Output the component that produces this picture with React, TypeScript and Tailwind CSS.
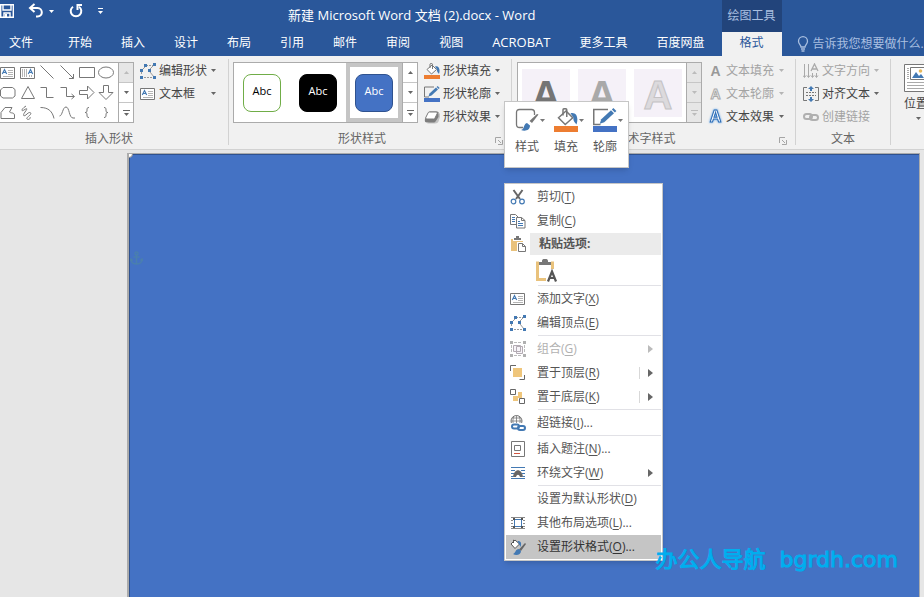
import React from 'react';
import clsx from 'clsx';

type IconProps = { className?: string };

const BLUE = '#4379b3';
const INK = '#777';

// ---------- small glyphs ----------

const Caret = ({ className = 'text-[#777]' }: IconProps) => (
  <svg viewBox="0 0 5 3" className={clsx('w-[5px] h-[3px] shrink-0', className)}>
    <path d="M0 0h5L2.5 3z" fill="currentColor" />
  </svg>
);

const Launcher = () => (
  <svg viewBox="0 0 8 8" className="w-2 h-2" fill="none" stroke="#a5a5a5">
    <path d="M.5 6V.5H6M3 3l3 3M7.5 3v4.5H3" />
  </svg>
);

const SaveIcon = () => (
  <svg viewBox="0 0 16 16" className="w-4 h-4" fill="none" stroke="#fff" strokeWidth="1.4">
    <path d="M1.7 1.7h12.6v12.6H1.7z" />
    <path d="M4 2v5h8V2" />
    <path d="M5 14v-4h6v4" />
    <path d="M6 11h2v3H6z" fill="#fff" stroke="none" />
  </svg>
);

const UndoIcon = () => (
  <svg viewBox="0 0 16 16" className="w-4 h-4" fill="none" stroke="#fff" strokeWidth="2">
    <path d="M6.5 1L2 5l4.5 4" />
    <path d="M2.500 5h7c5.500 0 6 8.500 0 8.500H8" />
  </svg>
);

const RedoIcon = () => (
  <svg viewBox="0 0 16 16" className="w-4 h-4" fill="none" stroke="#fff" strokeWidth="2">
    <path d="M5 3.700a5.300 5.300 0 1 0 6 0" />
    <path d="M14 2H9.500v5" />
  </svg>
);

const BulbIcon = () => (
  <svg viewBox="0 0 12 16" className="w-3 h-4" fill="none" stroke="#a9bfe0" strokeWidth="1.300">
    <path d="M4 11c0-2-2.500-3-2.500-5.800a4.500 4.500 0 0 1 9 0C10.500 8 8 9 8 11z" />
    <path d="M4 13h4M4.500 15h3" />
  </svg>
);

// ---------- shape gallery ----------

const TextBoxIcon = () => (
  <svg viewBox="0 0 16 16" className="w-4 h-4 shrink-0" fill="none" stroke={INK}>
    <path d="M.5 2.500h14v11H.5z" fill="#fff" />
    <path d="M8 5.500h5M8 7.500h5M8 9.500h5M3 11.500h10" stroke="#b4b4b4" />
    <path d="M2.300 9L4.500 4.500 6.700 9M3.200 7.500h2.600" stroke={BLUE} strokeWidth="1.200" />
  </svg>
);

const VerticalTextIcon = () => (
  <svg viewBox="0 0 16 16" className="w-4 h-4 shrink-0" fill="none" stroke={INK}>
    <path d="M.5 2.500h14v11H.5z" fill="#fff" />
    <path d="M2.500 4v8M4.500 4v8M6.500 4v8M9.500 10v2M11.500 10v2" stroke="#b4b4b4" />
    <path d="M8.300 9L10.500 4.500 12.700 9M9.200 7.500h2.600" stroke={BLUE} strokeWidth="1.200" />
  </svg>
);

const shapePaths = [
  'M1.500 1.500l13 13',
  'M1.500 1.500l13 13M14.500 10v4.500H10',
  'M.5 3.500h15v10H.5z',
  'M.5 8.500a7.500 5.500 0 1 0 15 0a7.500 5.500 0 1 0-15 0',
  'M3 3.500h9.500l2.500 2v6.500l-2.500 2H3L.5 12V6z',
  'M8 2.500l6.500 12h-13z',
  'M1.500 3.500h6v10h7',
  'M1.500 3.500h6v9h7.500M12.500 10l3 2.500-3 2.500',
  'M.5 6.500h8v-4.500l6.500 6.500-6.500 6.500v-4.500h-8z',
  'M5.500 1.500h5v7h4.500L8 15.500 1 8.500h4.500z',
  'M1 14.500v-6l4-5h7l-2.500 4.500c1 1.500 4.500 0 5 3v3.500z',
  'M6 2C1 5 1 8 4 6s4-2 1 2-1 5 2 2 5-1 3 1-4 3-3 4 4 0 3-2',
  'M1.500 3.500c8 0 12 4 13.500 11',
  'M.5 12c3 0 3-9 6.500-9s3 11 7 11h2',
  'M10 3.500c-2 0-2 1-2 2.500s0 2.500-2 2.500c2 0 2 1 2 2.500s0 2.500 2 2.500',
  'M6 3.500c2 0 2 1 2 2.500s0 2.500 2 2.500c-2 0-2 1-2 2.500s0 2.500-2 2.500',
];

const EditPointsIcon = () => (
  <svg viewBox="0 0 16 16" className="w-4 h-4 shrink-0" fill="none">
    <path d="M6 2.500h7M1.500 9v3M4 14.500h9" stroke="#999" strokeDasharray="2 1" />
    <path d="M5 4L2 7M13 3l-4 4M10 9l4 5" stroke="#999" />
    <path d="M4 1h3v3H4zM13 0h3v3h-3zM0 6h3v3H0zM8 6h3v3H8zM0 13h3v3H0zM13 13h3v3h-3z" fill={BLUE} />
  </svg>
);

// ---------- shape style icons ----------

const BucketIcon = ({ className = 'w-4 h-4' }: IconProps) => (
  <svg viewBox="0 0 16 16" className={clsx('shrink-0', className)} fill="none">
    <path d="M3 6.500L8 2l4.500 4.500-5 4.500z" fill="#fff" stroke={INK} />
    <path d="M6 5V1.200c0-1 2.500-1 2.500 0V6" stroke={INK} />
    <path d="M11 3.500c4-1 5.500 3 4 7.500-1-1.500-2.500-2.500-2-4.500z" fill={BLUE} />
    <path d="M0 12h16v4H0z" fill="#ed7d31" />
  </svg>
);

const PenIcon = ({ className = 'w-4 h-4' }: IconProps) => (
  <svg viewBox="0 0 16 16" className={clsx('shrink-0', className)} fill="none">
    <path d="M10 1H.5v10H5" stroke={INK} />
    <path d="M4.500 10.500l1-3L12 1.500l2 2L7.500 9.500z" fill={BLUE} />
    <path d="M12.600 1l1-1 2 2-1 1z" fill={BLUE} />
    <path d="M0 12h16v4H0z" fill="#4472c4" />
  </svg>
);

const EffectIcon = () => (
  <svg viewBox="0 0 16 16" className="w-4 h-4 shrink-0" fill="none">
    <path d="M3 14.500h8c2 0 3-1 3.500-2L16 8V4z" fill="#c4c4c4" />
    <path d="M5.500 2.500H13c1.500 0 2 1 1.500 2V8l-3 4.500c-.5.800-1 1-2 1H3c-2 0-2.500-1-2-4z" fill="#7d7d7d" />
    <path d="M5.500 3H12c1.500 0 1.500 1 1 2l-2 4c-.5 1-1 1-2 1H3C1.500 10 1.500 9 2 8l2-4c.4-.8.700-1 1.500-1z" fill="#fff" stroke="#7d7d7d" />
  </svg>
);

const StyleIcon = () => (
  <svg viewBox="0 0 24 24" className="w-6 h-6 shrink-0" fill="none">
    <path d="M8 19.500H4.500c-2 0-3-1-3-3v-12c0-2 1-3 3-3h12c2 0 3 1 3 3V7" stroke={INK} strokeWidth="1.300" />
    <path d="M23.500 6.500L17 15l-2.500-2L22 6z" fill={INK} />
    <path d="M6 22c4-1 2-6 6-7l3 2.500c0 5-5 6-9 4.500z" fill={BLUE} />
  </svg>
);

// ---------- text icons ----------

const LetterIcon = ({ kind }: { kind: 'fill' | 'outline' | 'glow' }) => (
  <span
    className={clsx(
      "w-[15px] text-center font-['Liberation_Sans'] font-bold leading-4",
      kind === 'fill' && 'text-sm text-[#999]',
      kind === 'outline' && 'text-sm text-[#f1f1f1] [-webkit-text-stroke:1px_#aaa]',
      kind === 'glow' && 'text-base text-white [-webkit-text-stroke:1px_#2f6db5] drop-shadow-[0_0_1px_#4f9be8]'
    )}
    aria-hidden
  >
    A
  </span>
);

const DirectionIcon = () => (
  <svg viewBox="0 0 16 16" className="w-4 h-4 shrink-0" fill="none" stroke="#aaa">
    <path d="M1.500 1v13M5.500 1v13M0 12.500l1.500 2 1.500-2M4 12.500l1.500 2 1.500-2M9.500 10v4M13.500 10v4M8 12.500l1.500 2 1.500-2M12 12.500l1.500 2 1.500-2" />
    <path d="M8 8l3.500-7L15 8M9.500 6h4" strokeWidth="1.300" />
  </svg>
);

const AlignIcon = () => (
  <svg viewBox="0 0 16 16" className="w-4 h-4 shrink-0" fill="none">
    <path d="M4 1.500H.5v13H4M12 1.500h3.500v13H12" stroke={INK} />
    <path d="M3 6.500h10M3 9.500h10" stroke={INK} strokeDasharray="2 1" />
    <path d="M8 0l3 3H9v2H7V3H5zM8 16l3-3H9v-2H7v2H5z" fill={BLUE} />
  </svg>
);

const LinkIcon = () => (
  <svg viewBox="0 0 16 16" className="w-4 h-4 shrink-0" fill="none" stroke="#b0b0b0" strokeWidth="2">
    <rect x="1" y="5" width="8" height="5" rx="2.500" />
    <rect x="7" y="6" width="8" height="5" rx="2.500" />
  </svg>
);

const PositionIcon = () => (
  <svg viewBox="0 0 28 28" className="w-7 h-7 shrink-0" fill="none">
    <path d="M.5.5h27v27H.5z" fill="#fff" stroke={INK} />
    <path d="M3 4.500h2M3 6.500h2M3 8.500h2M3 10.500h2M3 12.500h2M3 14.500h2M3 18.500h22M3 21.500h22M3 24.500h22" stroke="#aaa" />
    <path d="M6.500 3.500h15v12h-15z" fill="#fff" stroke={INK} />
    <path d="M8 14l4-6 3 4 2-2 3 4z" fill={BLUE} />
    <circle cx="16.500" cy="7" r="1.800" fill="#e8b95c" />
  </svg>
);

// ---------- context menu icons ----------

const CutIcon = () => (
  <svg viewBox="0 0 16 16" className="w-4 h-4" fill="none">
    <path d="M3.500 1l6.500 9M12.500 1L6 10" stroke="#666" strokeWidth="2" />
    <circle cx="3.500" cy="12.500" r="2.300" stroke={BLUE} strokeWidth="1.200" />
    <circle cx="12" cy="12.500" r="2.300" stroke={BLUE} strokeWidth="1.200" />
  </svg>
);

const CopyIcon = () => (
  <svg viewBox="0 0 16 16" className="w-4 h-4" fill="none" stroke={INK}>
    <path d="M.5 1.500h5l3 3v7h-8z" fill="#fff" />
    <path d="M2 4.500h3M2 6.500h3M2 8.500h3" stroke={BLUE} />
    <path d="M6.500 4.500h5l3.500 3v7.500H6.500z" fill="#fff" />
    <path d="M11.500 4.500v3h3.500" />
    <path d="M8 8.500h2M8 10.500h5M8 12.500h5" stroke={BLUE} />
  </svg>
);

const PasteIcon = () => (
  <svg viewBox="0 0 16 16" className="w-4 h-4" fill="none">
    <path d="M1 3h12v12H1z" fill="#e9c27c" />
    <path d="M3 1h10v4H3z" fill="#fff" />
    <path d="M4 2h2V0h3v2h2v2H4z" fill="#777" />
    <path d="M7 6h9v10H7z" fill="#fff" />
    <path d="M8.500 7.500h4l3 3v5h-7z" fill="#fff" stroke={INK} />
    <path d="M12.500 7.500v3h3" stroke={INK} />
  </svg>
);

const PasteTextIcon = () => (
  <svg viewBox="0 0 22 24" className="w-[22px] h-6" fill="none">
    <path d="M1.500 4h15v16.500h-15z" fill="#fff" stroke="#e9c27c" strokeWidth="3" />
    <path d="M3 1h12v5H3z" fill="#fff" />
    <path d="M3 3h3V2c0-3 6-3 6 0v1h3v3H3z" fill="#777" />
    <path d="M10 10h12v14H10z" fill="#fff" />
    <path d="M12 22.500L16 12.500l4 10M13.500 19h5" stroke="#555" strokeWidth="2.200" />
  </svg>
);

const GroupIcon = () => (
  <svg viewBox="0 0 16 16" className="w-4 h-4" fill="none">
    <path d="M3.500 4.500h7v6h-7zM6.500 5.500h6v7h-6z" fill="#f1ecf3" fillOpacity=".6" stroke="#b3abb3" />
    <path d="M4 1.500h8M4 14.500h8M1.500 4v8M14.500 4v8" stroke="#bbb" strokeDasharray="3 1" />
    <path d="M0 0h3v3H0zM13 0h3v3h-3zM0 13h3v3H0zM13 13h3v3h-3z" fill="#b0b0b0" />
  </svg>
);

const FrontIcon = () => (
  <svg viewBox="0 0 16 16" className="w-4 h-4" fill="none">
    <path d="M.5 6V.5H6M14.500 10v4.500H9.500" stroke="#666" />
    <path d="M3 3h9v9H3z" fill="#efc67c" />
  </svg>
);

const BackIcon = () => (
  <svg viewBox="0 0 16 16" className="w-4 h-4" fill="none">
    <path d="M3 7h5V3h4v6H8v3H3z" fill="#efc67c" />
    <path d="M.5.500h5v5h-5zM9.500 9.500h5V14.500H9.500z" fill="#fff" stroke="#666" />
  </svg>
);

const HyperlinkIcon = () => (
  <svg viewBox="0 0 16 16" className="w-4 h-4" fill="none">
    <circle cx="6.500" cy="6" r="5.500" stroke={INK} />
    <path d="M6.500.500v11M1 6h11M2 3h9M4 1C2.500 4 2.500 8 4 11M9 1c1.500 3 1.500 7 0 10" stroke={INK} strokeWidth=".8" />
    <path d="M0 8h16v8H0z" fill="#fff" />
    <rect x="2" y="9.500" width="7" height="4" rx="2" stroke={BLUE} strokeWidth="2" />
    <rect x="8" y="11" width="7" height="4" rx="2" stroke={BLUE} strokeWidth="2" />
  </svg>
);

const CaptionIcon = () => (
  <svg viewBox="0 0 16 16" className="w-4 h-4" fill="none">
    <path d="M1.500.500h13v15h-13z" fill="#fff" stroke={INK} />
    <path d="M4.500 4.500h6v5h-6z" stroke={INK} />
    <path d="M4 12.500h6" stroke="#d2553f" />
  </svg>
);

const WrapIcon = () => (
  <svg viewBox="0 0 16 16" className="w-4 h-4" fill="none">
    <path d="M1 2.500h14M1 13.500h14M1 11.500h2M13 11.500h2M1 8.500h3M12 8.500h3M1 5.500h4M11 5.500h4" stroke={BLUE} />
    <path d="M3 12c1-9 9-9 10 0h-3c-1-3-3-3-4 0z" fill="#666" />
  </svg>
);

const LayoutIcon = () => (
  <svg viewBox="0 0 16 16" className="w-4 h-4" fill="none">
    <path d="M1 2.500h14M1 13.500h14M1 5.500h2M1 8.500h2M1 11.500h2M13 5.500h2M13 8.500h2M13 11.500h2" stroke="#888" />
    <path d="M4.500 4.500h7v7h-7z" stroke={BLUE} />
    <path d="M3 3h2v2H3zM11 3h2v2h-2zM3 11h2v2H3zM11 11h2v2h-2z" fill="#555" />
  </svg>
);

const FormatShapeIcon = () => (
  <svg viewBox="0 0 16 16" className="w-4 h-4" fill="none">
    <path d="M1 5l4-4 4.500 4L5 9.500z" fill="#fff" stroke="#555" />
    <path d="M3.500 4V.800" stroke="#555" />
    <path d="M7.500 2c3 0 4.500 1.500 3 6L9 5z" fill={BLUE} />
    <path d="M16 5l-5 7-2-1.500L15 4z" fill="#666" />
    <path d="M3 15c3-1 2-5 6-5l2 2c0 4-5 5-8 3z" fill={BLUE} />
  </svg>
);

// ---------- ribbon pieces ----------

const tabs = ['开始', '插入', '设计', '布局', '引用', '邮件', '审阅', '视图', 'ACROBAT', '更多工具', '百度网盘'];

const GalleryScroll = ({ upOff, allOff }: { upOff?: boolean; allOff?: boolean }) => {
  const off = 'bg-[#e6e6e6] text-[#bbb]';
  const on = 'bg-white text-[#666]';
  const cell = 'flex-1 flex flex-col gap-[2px] items-center justify-center';
  return (
    <div className="w-[15px] shrink-0 flex flex-col border-l border-[#ababab] divide-y divide-[#c6c6c6]">
      <button aria-label="上一行" className={clsx(cell, upOff || allOff ? off : on)}>
        <Caret className="rotate-180" />
      </button>
      <button aria-label="下一行" className={clsx(cell, allOff ? off : on)}>
        <Caret className="" />
      </button>
      <button aria-label="其他" className={clsx(cell, allOff ? off : on)}>
        <span className="w-[7px] h-px bg-current" />
        <Caret className="" />
      </button>
    </div>
  );
};

interface CommandProps {
  icon: React.ReactNode;
  label: string;
  disabled?: boolean;
  noCaret?: boolean;
}

const Command = ({ icon, label, disabled, noCaret }: CommandProps) => (
  <button
    disabled={disabled}
    className={clsx('w-full h-[23px] flex items-center gap-[3px] whitespace-nowrap', disabled ? 'text-[#a3a3a3]' : 'text-[#444]')}
  >
    {icon}
    <span>{label}</span>
    {!noCaret && <Caret className={clsx('ml-auto', disabled ? 'text-[#b5b5b5]' : 'text-[#666]')} />}
  </button>
);

interface GroupProps {
  label: string;
  launcher?: boolean;
  className?: string;
  bodyClass?: string;
  children: React.ReactNode;
}

const Group = ({ label, launcher, className, bodyClass, children }: GroupProps) => (
  <section className={clsx('shrink-0 flex flex-col justify-between border-r border-[#d2d2d2]', className)}>
    <div className={clsx('flex', bodyClass)}>{children}</div>
    <div className="h-3 flex items-center leading-3 text-[#666]">
      <span className="flex-1 text-center">{label}</span>
      {launcher && (
        <button aria-label={`${label}设置`} className="w-3 h-3 flex items-end justify-start">
          <Launcher />
        </button>
      )}
    </div>
  </section>
);

const shapeStyles = [
  'bg-white text-black border-[#70ad47]',
  'bg-black text-white border-black',
  'bg-[#4472c4] text-white border-[#2f528f]',
];

const wordArt = [
  'text-[#757575]',
  'text-[#a9a9a9]',
  'text-[#dcdadd] [-webkit-text-stroke:1px_#c4c2c4]',
];

const Ribbon = () => (
  <div className="h-[94px] shrink-0 flex pt-[3px] pb-1 bg-[#f1f1f1] border-b border-[#d2d2d2] overflow-hidden">
    <Group label="插入形状" className="w-[229px] pr-[10px]">
      <div className="mt-[3px] h-[61px] flex bg-white border border-l-0 border-[#ababab]">
        <div className="w-[118px] grid grid-cols-6">
          <button aria-label="文本框" className="flex items-center"><TextBoxIcon /></button>
          <button aria-label="竖排文本框" className="flex items-center"><VerticalTextIcon /></button>
          {shapePaths.map((d, i) => (
            <button key={i} aria-label={`形状 ${i + 1}`} className="flex items-center">
              <svg viewBox="0 0 16 17" className="w-4 h-[17px]" fill="none" stroke={INK}>
                <path d={d} />
              </svg>
            </button>
          ))}
        </div>
        <GalleryScroll upOff />
      </div>
      <div className="w-[82px] pl-[6px]">
        <Command icon={<EditPointsIcon />} label="编辑形状" />
        <Command icon={<TextBoxIcon />} label="文本框" />
      </div>
    </Group>

    <Group label="形状样式" launcher className="w-[283px] pr-1" bodyClass="pl-1">
      <div className="mt-[3px] h-[61px] flex bg-white border border-[#ababab]">
        {shapeStyles.map((style, i) => (
          <button
            key={style}
            className={clsx('w-14 flex items-center justify-center border-4', i === 2 ? 'border-[#c5c5c5]' : 'border-transparent')}
          >
            <span className={clsx('w-[38px] h-[38px] rounded-lg border pt-2 text-[11px] leading-4', style)}>Abc</span>
          </button>
        ))}
        <GalleryScroll />
      </div>
      <div className="w-[82px] pl-[6px]">
        <Command icon={<BucketIcon />} label="形状填充" />
        <Command icon={<PenIcon />} label="形状轮廓" />
        <Command icon={<EffectIcon />} label="形状效果" />
      </div>
    </Group>

    <Group label="艺术字样式" launcher className="w-[284px] pr-1" bodyClass="pl-[5px]">
      <div className="mt-[3px] h-[61px] flex bg-white border border-[#ababab]">
        {wordArt.map((style) => (
          <button key={style} aria-label="艺术字" className="w-14 flex items-center justify-center">
            <span className={clsx("w-12 h-12 bg-[#f5f1f8] font-['Liberation_Sans'] font-bold text-[40px] leading-[52px]", style)}>A</span>
          </button>
        ))}
        <GalleryScroll allOff />
      </div>
      <div className="w-[82px] pl-[6px]">
        <Command icon={<LetterIcon kind="fill" />} label="文本填充" disabled />
        <Command icon={<LetterIcon kind="outline" />} label="文本轮廓" disabled />
        <Command icon={<LetterIcon kind="glow" />} label="文本效果" />
      </div>
    </Group>

    <Group label="文本" className="w-[95px]" bodyClass="pl-[7px]">
      <div className="w-[76px]">
        <Command icon={<DirectionIcon />} label="文字方向" disabled />
        <Command icon={<AlignIcon />} label="对齐文本" />
        <Command icon={<LinkIcon />} label="创建链接" disabled noCaret />
      </div>
    </Group>

    <button className="shrink-0 self-start ml-[13px] mt-[5px] flex flex-col items-center text-[#444]">
      <PositionIcon />
      <span className="mt-1 leading-4 self-start">位置</span>
      <Caret className="mt-[5px] text-[#666]" />
    </button>
  </div>
);

const Header = () => (
  <header className="h-14 shrink-0 flex bg-[#2a579a] text-white overflow-hidden">
    <div className="shrink-0 flex flex-col pr-[17px]">
      <div className="h-8 flex items-center">
        <div className="flex items-center pb-[10px]">
          <button aria-label="保存" className="-ml-px"><SaveIcon /></button>
          <button aria-label="撤消" className="ml-[13px] flex items-center gap-[5px]">
            <UndoIcon />
            <Caret className="text-white" />
          </button>
          <button aria-label="重复" className="ml-[14px]"><RedoIcon /></button>
          <button aria-label="自定义快速访问工具栏" className="ml-[14px] flex flex-col items-center gap-[2px]">
            <span className="w-[5px] h-px bg-white" />
            <Caret className="text-white" />
          </button>
        </div>
        <h1 className="flex-1 pl-4 text-center text-[13px]">新建 Microsoft Word 文档 (2).docx - Word</h1>
      </div>
      <nav className="h-6 flex items-center gap-[29px] pb-[2px] pl-[9px] whitespace-nowrap">
        <button className="mr-[6px]">文件</button>
        {tabs.map((tab) => (
          <button key={tab} className={clsx(tab === 'ACROBAT' && 'text-[13px]')}>{tab}</button>
        ))}
      </nav>
    </div>
    <div className="w-[60px] shrink-0 flex flex-col text-center">
      <div className="h-8 bg-[#22447b] text-[#a9bfe0] leading-8">绘图工具</div>
      <button className="h-6 bg-[#f1f1f1] text-[#2a579a] pb-[2px]">格式</button>
    </div>
    <label className="flex-1 min-w-0 self-end h-6 flex items-center gap-1 pl-[15px]">
      <BulbIcon />
      <input
        aria-label="操作说明搜索"
        placeholder="告诉我您想要做什么..."
        className="flex-1 min-w-0 bg-transparent outline-none placeholder:text-[#a9bfe0]"
      />
    </label>
  </header>
);

// ---------- floating layers ----------

const miniTools = [
  { label: '样式', icon: <StyleIcon /> },
  { label: '填充', icon: <BucketIcon className="w-6 h-6" /> },
  { label: '轮廓', icon: <PenIcon className="w-6 h-6" /> },
];

const MiniToolbar = () => (
  <div className="absolute left-[504px] top-[101px] w-[125px] h-[67px] flex gap-[9px] pl-[10px] pt-[6px] bg-white border border-[#c6c6c6] shadow-md text-[#555]">
    {miniTools.map(({ label, icon }) => (
      <button key={label} className="w-[30px] shrink-0 flex flex-col">
        <span className="flex items-center gap-px">
          {icon}
          <Caret />
        </span>
        <span className="w-6 mt-[7px] leading-4">{label}</span>
      </button>
    ))}
  </div>
);

interface MenuItem {
  label: string;
  hotkey: string;
  tail?: string;
  icon?: React.ReactNode;
  arrow?: boolean;
  split?: boolean;
  disabled?: boolean;
  active?: boolean;
}

const menuSections: MenuItem[][] = [
  [
    { label: '添加文字', hotkey: 'X', icon: <TextBoxIcon /> },
    { label: '编辑顶点', hotkey: 'E', icon: <EditPointsIcon /> },
  ],
  [
    { label: '组合', hotkey: 'G', icon: <GroupIcon />, arrow: true, disabled: true },
    { label: '置于顶层', hotkey: 'R', icon: <FrontIcon />, arrow: true, split: true },
    { label: '置于底层', hotkey: 'K', icon: <BackIcon />, arrow: true, split: true },
  ],
  [{ label: '超链接', hotkey: 'I', tail: '...', icon: <HyperlinkIcon /> }],
  [
    { label: '插入题注', hotkey: 'N', tail: '...', icon: <CaptionIcon /> },
    { label: '环绕文字', hotkey: 'W', icon: <WrapIcon />, arrow: true },
  ],
  [
    { label: '设置为默认形状', hotkey: 'D' },
    { label: '其他布局选项', hotkey: 'L', tail: '...', icon: <LayoutIcon /> },
    { label: '设置形状格式', hotkey: 'O', tail: '...', icon: <FormatShapeIcon />, active: true },
  ],
];

const MenuRow = ({ item }: { item: MenuItem }) => (
  <button
    role="menuitem"
    disabled={item.disabled}
    className={clsx(
      'w-full h-6 flex items-center pl-1 pr-2 text-left',
      item.active ? 'bg-[#c5c5c5] text-[#333]' : item.disabled ? 'text-[#b1b1b1]' : 'text-[#555]'
    )}
  >
    <span className="w-[27px] shrink-0">{item.icon}</span>
    <span className="flex-1 whitespace-nowrap">
      {item.label}(<u className="underline-offset-2">{item.hotkey}</u>){item.tail}
    </span>
    {item.split && <span className="w-px h-3 mr-2 bg-[#d8d8d8]" />}
    {item.arrow && (
      <svg viewBox="0 0 5 8" className={clsx('w-[5px] h-2', item.disabled ? 'text-[#bbb]' : 'text-[#666]')}>
        <path d="M0 0l5 4-5 4z" fill="currentColor" />
      </svg>
    )}
  </button>
);

const ContextMenu = () => (
  <div role="menu" className="absolute left-[504px] top-[183px] w-[159px] p-px bg-white border border-[#c6c6c6] shadow-md">
    <MenuRow item={{ label: '剪切', hotkey: 'T', icon: <CutIcon /> }} />
    <MenuRow item={{ label: '复制', hotkey: 'C', icon: <CopyIcon /> }} />
    <div className="h-6 flex items-start pl-1">
      <span className="w-5 shrink-0 pt-[3px]"><PasteIcon /></span>
      <span className="flex-1 h-[22px] pl-[9px] bg-[#ebebeb] text-[#555] font-bold leading-[22px]">粘贴选项:</span>
    </div>
    <button role="menuitem" aria-label="只保留文本" className="h-7 block pl-[30px]">
      <PasteTextIcon />
    </button>
    {menuSections.map((section, i) => (
      <div key={i}>
        <div className="h-[2px] ml-8 border-t border-[#e1e1e6]" />
        {section.map((item) => (
          <MenuRow key={item.hotkey} item={item} />
        ))}
      </div>
    ))}
  </div>
);

const Anchor = () => (
  <svg viewBox="0 0 13 15" className="w-[13px] h-[15px]" fill="none" stroke="#4a7fae" strokeWidth="1.500">
    <circle cx="6.500" cy="2.500" r="1.500" />
    <path d="M6.500 4v9M3.500 6h6M1 8.500c0 6 11 6 11 0M0 10l1-2 2 1.500M13 10l-1-2-2 1.500" />
  </svg>
);

const App = () => (
  <div className="relative h-screen flex flex-col overflow-hidden bg-[#e6e6e6] text-xs font-['Open_Sans','Noto_Sans_CJK_SC',sans-serif]">
    <Header />
    <Ribbon />
    <main className="flex-1 flex pt-[3px] pl-[127px] pr-1">
      <div className="relative flex-1 overflow-hidden bg-[#4472c4] border-t border-r border-l-2 border-[#ababab]">
        <div className="h-full border-t border-l border-[#2f528f] pt-[96px]">
          <Anchor />
        </div>
        <span className="absolute -left-1 -top-1 w-2 h-2 rounded-full bg-white border border-[#8a8a8a]" />
      </div>
    </main>
    <MiniToolbar />
    <ContextMenu />
    <p className="absolute right-[26px] bottom-[21px] flex gap-[14px] text-[22px] leading-8 text-[#00aeef] font-['DejaVu_Sans','Noto_Sans_CJK_SC',sans-serif] [-webkit-text-stroke:1px]">
      <span>办公人导航</span>
      <span>bgrdh.com</span>
    </p>
  </div>
);

export default App;
